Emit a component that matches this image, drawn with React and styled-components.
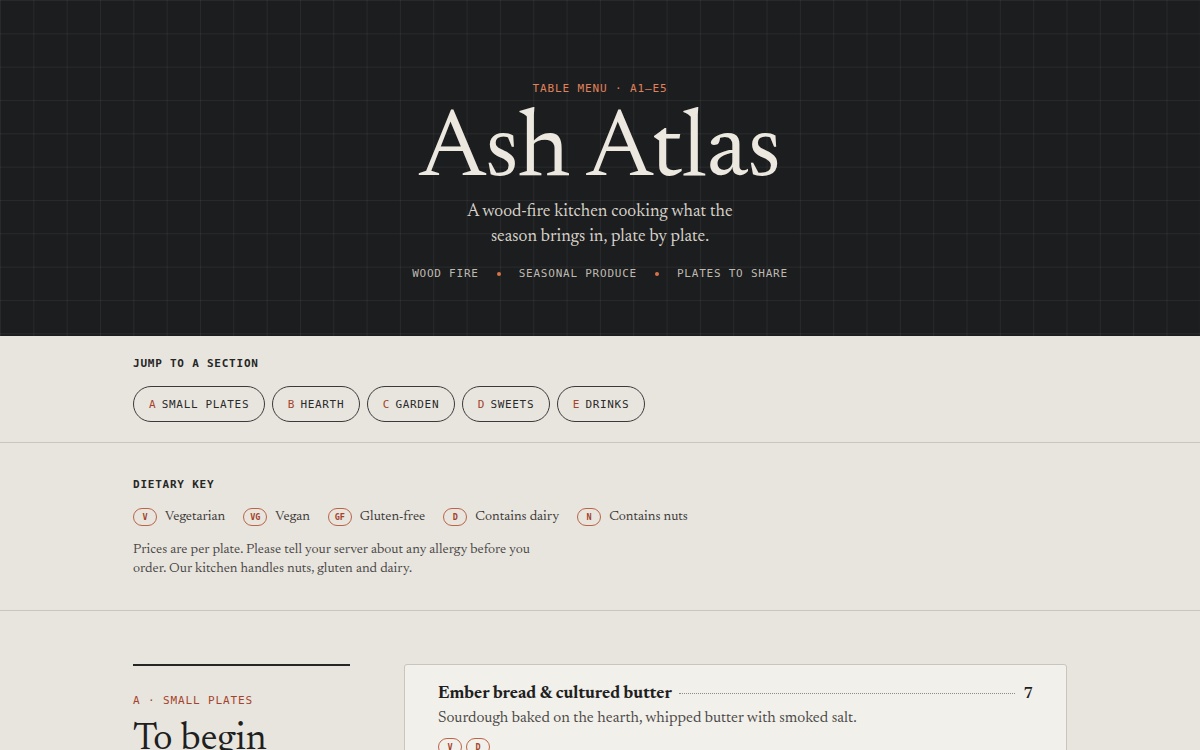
import React from "react"
import styled, { createGlobalStyle } from "styled-components"

const GlobalStyle = createGlobalStyle`
  * { box-sizing: border-box; }
  body {
    margin: 0;
    background: #e8e5df;
    font-family: "Newsreader", "Liberation Serif", serif;
    color: #1f1f1f;
  }
`

const serif = `"Newsreader", "Liberation Serif", serif`
const mono = `"DejaVu Sans Mono", "Liberation Mono", monospace`

const Hero = styled.header`
  background-color: #1c1d1f;
  background-image: linear-gradient(to right, rgba(255, 255, 255, 0.055) 1px, transparent 1px),
    linear-gradient(to bottom, rgba(255, 255, 255, 0.055) 1px, transparent 1px);
  background-size: 33.333px 33.333px;
  padding: 81px 20px 54px;
  display: flex;
  flex-direction: column;
  align-items: center;
  text-align: center;
`

const Eyebrow = styled.div`
  font-family: ${mono};
  font-size: 11px;
  line-height: 16px;
  letter-spacing: 0.08em;
  color: #e0825a;
`

const Title = styled.h1`
  margin: 8px 0 0;
  font-family: ${serif};
  font-weight: 400;
  font-size: 96px;
  line-height: 95px;
  letter-spacing: -0.005em;
  color: #ece8df;
`

const Lede = styled.p`
  margin: 0;
  max-width: 290px;
  font-size: 17.5px;
  line-height: 25px;
  color: #d8d4cb;
`

const Tags = styled.div`
  margin-top: 16px;
  display: flex;
  align-items: center;
  gap: 18px;
  font-family: ${mono};
  font-size: 11px;
  line-height: 16px;
  letter-spacing: 0.07em;
  color: #bfbab0;
`

const Dot = styled.span`
  width: 4px;
  height: 4px;
  border-radius: 50%;
  background: #d9744a;
`

const Band = styled.section`
  border-bottom: 1px solid #c9c5bd;
  padding: ${(p) => p.$pad};
`

const Wrap = styled.div`
  max-width: 934px;
  margin: 0 auto;
`

const Label = styled.h2`
  margin: 0;
  font-family: ${mono};
  font-size: 11px;
  line-height: 16px;
  font-weight: 700;
  letter-spacing: 0.07em;
  color: #262626;
`

const PillRow = styled.nav`
  margin-top: 14px;
  display: flex;
  gap: 6.5px;
`

const Pill = styled.a`
  height: 36px;
  padding: 0 15px;
  display: inline-flex;
  align-items: center;
  gap: 5.5px;
  border: 1px solid #3a3a3a;
  border-radius: 18px;
  font-family: ${mono};
  font-size: 11px;
  letter-spacing: 0.06em;
  color: #2a2a2a;
  text-decoration: none;
`

const Letter = styled.span`
  color: #a5432a;
`

const KeyRow = styled.div`
  margin-top: 15px;
  display: flex;
  align-items: center;
  gap: 18px;
`

const KeyItem = styled.span`
  display: inline-flex;
  align-items: center;
  gap: 8px;
  font-size: 14px;
  color: #3a3835;
`

const Badge = styled.span`
  display: inline-flex;
  align-items: center;
  justify-content: center;
  min-width: 24px;
  height: 18px;
  padding: 0 5px;
  border: 1px solid #bb6446;
  border-radius: 9px;
  font-family: ${mono};
  font-size: 8.5px;
  font-weight: 700;
  color: #a5432a;
`

const Note = styled.p`
  margin: 15px 0 0;
  max-width: 410px;
  font-size: 14px;
  line-height: 19px;
  color: #4a4845;
`

const MenuBand = styled.section`
  padding: 53px 0 40px;
`

const MenuGrid = styled.div`
  display: grid;
  grid-template-columns: 217px 1fr;
  gap: 54px;
  align-items: start;
`

const SectionHead = styled.div`
  border-top: 2px solid #262626;
  padding-top: 27px;
`

const Kicker = styled.div`
  font-family: ${mono};
  font-size: 11px;
  line-height: 16px;
  letter-spacing: 0.08em;
  color: #a5432a;
`

const SectionTitle = styled.h3`
  margin: 10px 0 0;
  font-family: ${serif};
  font-weight: 400;
  font-size: 38px;
  line-height: 42px;
  color: #1f1f1f;
`

const Card = styled.div`
  background: #f2f0eb;
  border: 1px solid #c9c5bd;
  border-radius: 3px;
  padding: 17px 33px 20px;
`

const Item = styled.article`
  padding-bottom: 20px;
`

const ItemHead = styled.div`
  display: flex;
  align-items: baseline;
  gap: 7px;
`

const ItemName = styled.h4`
  margin: 0;
  font-family: ${serif};
  font-size: 17.5px;
  line-height: 24px;
  font-weight: 700;
  color: #1f1f1f;
`

const Leader = styled.span`
  flex: 1;
  border-bottom: 1px dotted #8f8b84;
  transform: translateY(-4px);
`

const Price = styled.span`
  font-family: ${serif};
  font-size: 16px;
  font-weight: 600;
  color: #1f1f1f;
  padding-left: 2px;
`

const ItemDesc = styled.p`
  margin: 0;
  font-size: 15.75px;
  line-height: 24px;
  color: #4a4845;
`

const ItemBadges = styled.div`
  margin-top: 8px;
  display: flex;
  gap: 4px;
`

const sections = [
  ["A", "Small plates"],
  ["B", "Hearth"],
  ["C", "Garden"],
  ["D", "Sweets"],
  ["E", "Drinks"],
]

const dietary = [
  ["V", "Vegetarian"],
  ["VG", "Vegan"],
  ["GF", "Gluten-free"],
  ["D", "Contains dairy"],
  ["N", "Contains nuts"],
]

const items = [
  {
    name: "Ember bread & cultured butter",
    desc: "Sourdough baked on the hearth, whipped butter with smoked salt.",
    price: "7",
    tags: ["V", "D"],
  },
]

export default function App() {
  return (
    <>
      <GlobalStyle />
      <Hero>
        <Eyebrow>TABLE MENU · A1–E5</Eyebrow>
        <Title>Ash Atlas</Title>
        <Lede>A wood-fire kitchen cooking what the season brings in, plate by plate.</Lede>
        <Tags>
          <span>WOOD FIRE</span>
          <Dot />
          <span>SEASONAL PRODUCE</span>
          <Dot />
          <span>PLATES TO SHARE</span>
        </Tags>
      </Hero>

      <Band $pad="20px 0 20px">
        <Wrap>
          <Label>JUMP TO A SECTION</Label>
          <PillRow>
            {sections.map(([k, name]) => (
              <Pill key={k} href={`#${k}`}>
                <Letter>{k}</Letter>
                {name.toUpperCase()}
              </Pill>
            ))}
          </PillRow>
        </Wrap>
      </Band>

      <Band $pad="34px 0 31px">
        <Wrap>
          <Label>DIETARY KEY</Label>
          <KeyRow>
            {dietary.map(([k, label]) => (
              <KeyItem key={k}>
                <Badge>{k}</Badge>
                {label}
              </KeyItem>
            ))}
          </KeyRow>
          <Note>
            Prices are per plate. Please tell your server about any allergy before you order. Our kitchen
            handles nuts, gluten and dairy.
          </Note>
        </Wrap>
      </Band>

      <MenuBand id="A">
        <Wrap>
          <MenuGrid>
            <SectionHead>
              <Kicker>A · SMALL PLATES</Kicker>
              <SectionTitle>To begin</SectionTitle>
            </SectionHead>
            <Card>
              {items.map((it) => (
                <Item key={it.name}>
                  <ItemHead>
                    <ItemName>{it.name}</ItemName>
                    <Leader />
                    <Price>{it.price}</Price>
                  </ItemHead>
                  <ItemDesc>{it.desc}</ItemDesc>
                  <ItemBadges>
                    {it.tags.map((t) => (
                      <Badge key={t}>{t}</Badge>
                    ))}
                  </ItemBadges>
                </Item>
              ))}
            </Card>
          </MenuGrid>
        </Wrap>
      </MenuBand>
    </>
  )
}
